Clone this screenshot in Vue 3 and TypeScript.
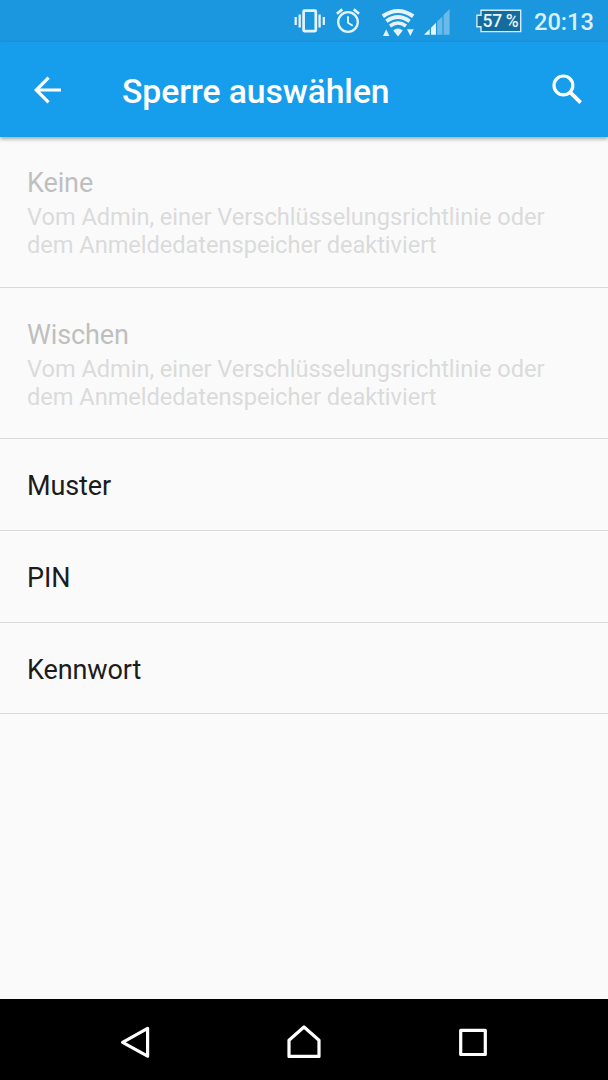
<script setup lang="ts">
interface LockOption {
  title: string
  summary?: string
}

const blocked = 'Vom Admin, einer Verschlüsselungsrichtlinie oder dem Anmeldedatenspeicher deaktiviert'

const options: LockOption[] = [
  { title: 'Keine', summary: blocked },
  { title: 'Wischen', summary: blocked },
  { title: 'Muster' },
  { title: 'PIN' },
  { title: 'Kennwort' },
]
</script>

<template>
  <div class="screen">
    <div class="status">
      <svg class="vibrate" width="32" height="42" viewBox="0 0 32 42">
        <path d="M1.7 17v8M5.7 14.5v13M25.6 14.5v13M29.8 17v8" stroke="#e4f3fc" stroke-width="2.3" />
        <rect x="9.6" y="10.7" width="12.2" height="20.4" rx="0.8" fill="none" stroke="#e4f3fc" stroke-width="2.7" />
      </svg>
      <svg class="alarm" width="26" height="42" viewBox="0 0 26 42" fill="none" stroke="#e4f3fc">
        <circle cx="13" cy="22" r="9.8" stroke-width="2.3" />
        <path d="M1.9 13.8L7.3 9.4M18.7 9.4l5.4 4.4" stroke-width="2.7" />
        <path d="M13 16.3v6.5l4.7 3" stroke-width="1.9" />
      </svg>
      <svg class="wifi" width="34" height="42" viewBox="0 0 34 42">
        <g fill="none" stroke="#e4f3fc">
          <path d="M1.8 16.3Q17 5.7 32.2 16.3" stroke-width="4.1" />
          <path d="M5.4 21.3Q17 12.8 28.6 21.3" stroke-width="3.8" />
          <path d="M9 26Q17 20 25 26" stroke-width="3.6" />
        </g>
        <g fill="#e4f3fc">
          <path d="M12.2 30.6Q17 26.6 21.8 30.6L17 36.6z" />
          <path d="M2 36l3.2-6.7L8.4 36zM26 29.3h6.7L29.3 36z" />
        </g>
      </svg>
      <svg class="signal" width="26" height="42" viewBox="0 0 26 42" fill="#e4f3fc">
        <path d="M0 34.8L5.7 29v5.8zM7 27.7l5-5v12.1H7z" />
        <path d="M13.2 21.6l5.2-5.2v18.4h-5.2zM19.6 15.1l6-6v25.7h-6z" opacity=".4" />
      </svg>
      <div class="battery">
        <svg width="46" height="42" viewBox="0 0 46 42">
          <path d="M5 10.3h39.7v21.3H5v-4.8H.9V15.3H5z" fill="#146b9c" stroke="#d5ebf8" stroke-width="1.4" />
        </svg>
        <span class="percent">57 %</span>
      </div>
      <span class="clock">20:13</span>
    </div>
    <header class="bar">
      <svg class="back" width="28" height="28" viewBox="0 0 28 28" fill="none" stroke="#fff" stroke-width="3.2">
        <path d="M27 14H3M14.6 1.6L2.2 14l12.4 12.4" />
      </svg>
      <h1 class="heading">Sperre auswählen</h1>
      <svg class="search" width="31" height="31" viewBox="0 0 31 31" fill="none" stroke="#fff">
        <circle cx="11.4" cy="11.4" r="9.4" stroke-width="3.2" />
        <path d="M18.3 18.3l10.3 10.3" stroke-width="3.8" />
      </svg>
    </header>
    <main class="list">
      <div v-for="option in options" :key="option.title" class="row" :class="{ disabled: option.summary }">
        <div class="title">{{ option.title }}</div>
        <div v-if="option.summary" class="summary">{{ option.summary }}</div>
      </div>
    </main>
    <nav class="nav">
      <svg width="30" height="36" viewBox="0 0 30 36">
        <path d="M2.6 18.3L27.6 4.4v27.8z" />
      </svg>
      <svg width="36" height="36" viewBox="0 0 36 36">
        <path d="M3 16.2L18 3l15 13.2v16.2H3z" />
      </svg>
      <svg width="30" height="36" viewBox="0 0 30 36">
        <path d="M2.7 6.3h24.6v24.2H2.7z" />
      </svg>
    </nav>
  </div>
</template>

<style>
body {
  margin: 0;
}
</style>

<style scoped>
.screen {
  width: 608px;
  height: 1080px;
  display: flex;
  flex-direction: column;
  overflow: hidden;
  background: #fafafa;
  font-family: Roboto, sans-serif;
}
.status {
  height: 42px;
  flex: none;
  display: flex;
  align-items: center;
  background: #1a97de;
}
.status svg {
  display: block;
  flex: none;
}
.vibrate {
  margin-left: 293.5px;
}
.alarm {
  margin-left: 9.5px;
}
.wifi {
  margin-left: 20px;
}
.signal {
  margin-left: 9px;
}
.battery {
  width: 46px;
  display: grid;
  margin-left: 26px;
}
.battery > * {
  grid-area: 1 / 1;
}
.percent {
  align-self: center;
  padding-left: 6.5px;
  color: #e8f5fc;
  font-size: 17.5px;
  font-weight: 500;
  line-height: 42px;
  letter-spacing: -0.3px;
  white-space: nowrap;
}
.clock {
  margin: 2px 0 0 12px;
  color: #dceffb;
  font-size: 23.6px;
  font-weight: 500;
  line-height: 44px;
}
.bar {
  position: relative;
  height: 95px;
  flex: none;
  display: flex;
  align-items: center;
  background: #169dec;
  box-shadow: 0 2px 4px rgba(0, 0, 0, 0.34);
}
.back {
  margin-left: 34px;
}
.heading {
  flex: 1;
  margin: 4px 0 0 60px;
  color: #fff;
  font-size: 33.7px;
  font-weight: 500;
  line-height: 40px;
  letter-spacing: -0.08px;
}
.search {
  margin-right: 25px;
}
.list {
  flex: 1;
}
.row {
  height: 91.75px;
  box-sizing: border-box;
  padding: 31px 27px 0;
  border-bottom: 1px solid #d9d9d9;
  color: #1c1c1c;
}
.row.disabled {
  height: 151px;
  color: #bfbfbf;
}
.row.disabled:first-child {
  padding-top: 30px;
}
.title {
  font-size: 27px;
  line-height: 32px;
  letter-spacing: -0.12px;
}
.summary {
  margin-top: 5px;
  color: #dadbdb;
  font-size: 23.65px;
  line-height: 27.7px;
  letter-spacing: -0.05px;
}
.nav {
  height: 81px;
  flex: none;
  display: grid;
  grid-template-columns: 30px 36px 30px;
  justify-content: center;
  column-gap: 136px;
  padding-top: 25px;
  box-sizing: border-box;
  background: #000;
}
.nav svg {
  display: block;
  fill: none;
  stroke: #fff;
  stroke-width: 3.2;
  stroke-linejoin: round;
}
</style>
